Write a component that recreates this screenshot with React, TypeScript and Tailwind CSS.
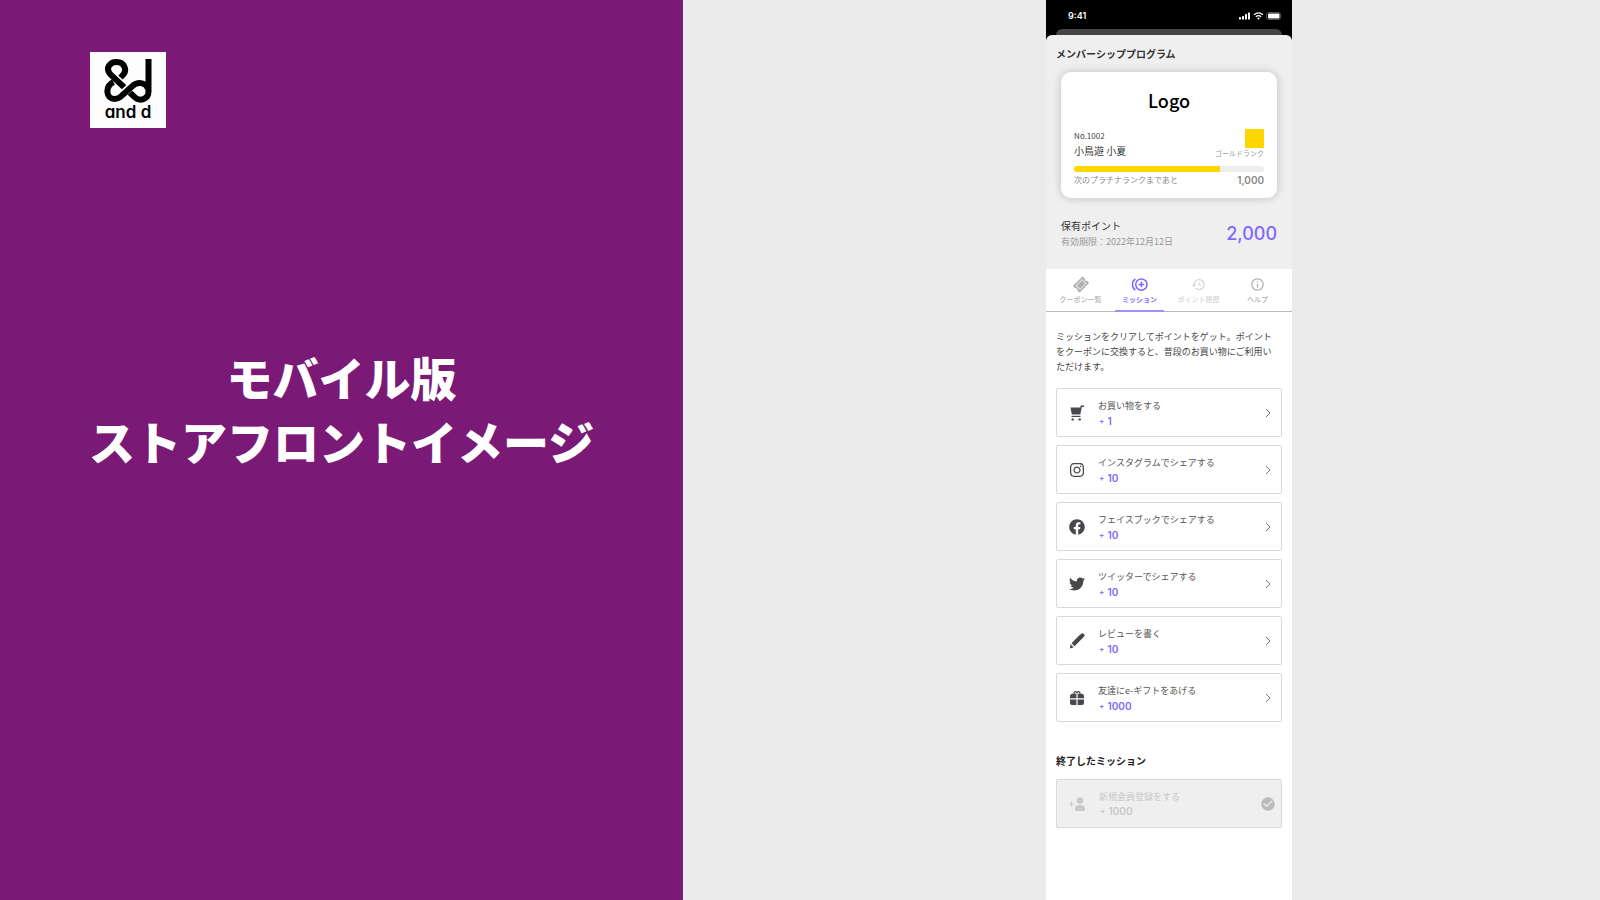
import type { ComponentType } from "react"
import { MdCheckCircle, MdHistory, MdInfoOutline } from "react-icons/md"
import { FaFacebook, FaInstagram, FaTicketAlt, FaTwitter } from "react-icons/fa"

type Icon = ComponentType<{ className?: string }>

interface Mission {
  icon: Icon
  title: string
  points: string
}

interface Tab {
  icon: Icon
  label: string
  color: string
  active?: boolean
}

function CartIcon({ className }: { className?: string }) {
  return (
    <svg viewBox="0 0 16 16" className={className} fill="currentColor">
      <path d="M1.5 2.5h9.700L11.800.6H15v1.300h-2.200L11.300 9.500H2.800z" />
      <path d="M2.500 10.800h9v1.200h-9z" />
      <circle cx="3.700" cy="14.400" r="1.200" />
      <circle cx="10.700" cy="14.400" r="1.200" />
    </svg>
  )
}

function PencilIcon({ className }: { className?: string }) {
  return (
    <svg viewBox="0 0 16 16" className={className} fill="currentColor">
      <path d="M10.400 2.300 12 .9a2 2 0 0 1 2.900 2.900L5.600 13.300 2.500 10.300z" />
      <path d="M1.700 11.200 4.700 14.200.700 15.500z" />
    </svg>
  )
}

function GiftIcon({ className }: { className?: string }) {
  return (
    <svg viewBox="0 0 16 16" className={className} fill="currentColor">
      <path
        d="M5.200 4.200C4.400 2 6.600.6 8 2.800 9.400.6 11.600 2 10.800 4.200"
        fill="none"
        stroke="currentColor"
        strokeWidth="1.200"
      />
      <path d="M3.500 3.700h3.900v4.600H1V6.200a2.500 2.500 0 0 1 2.500-2.500zM8.600 3.700h3.900A2.500 2.500 0 0 1 15 6.200v2.100H8.600zM1 9.500h6.400v5.500H3a2 2 0 0 1-2-2zM8.600 9.500H15V13a2 2 0 0 1-2 2H8.600z" />
    </svg>
  )
}

function ChevronIcon({ className }: { className?: string }) {
  return (
    <svg viewBox="0 0 6 10" className={className} fill="none" stroke="currentColor" strokeWidth="1">
      <path d="M1 1l4 4-4 4" />
    </svg>
  )
}

function TicketIcon({ className }: { className?: string }) {
  return (
    <span className={className}>
      <FaTicketAlt className="mx-auto h-full w-[14px] -rotate-45" />
    </span>
  )
}

function MissionIcon({ className }: { className?: string }) {
  return (
    <svg viewBox="0 0 18 16" className={className} fill="none" stroke="currentColor" strokeWidth="1.600">
      <circle cx="11" cy="8" r="6" />
      <path d="M11 5v6M8 8h6M4.500 2a7.500 7.500 0 0 0 0 12" />
    </svg>
  )
}

function AddPersonIcon({ className }: { className?: string }) {
  return (
    <svg viewBox="0 0 16 16" className={className} fill="currentColor">
      <circle cx="11" cy="4.500" r="3.200" />
      <path d="M6 15v-2.500C6 10 8 9 11 9s5 1 5 3.500V15z" />
      <path d="M0 8h5M2.500 5.500v5" stroke="currentColor" strokeWidth="1" />
    </svg>
  )
}

const tabs: Tab[] = [
  { icon: TicketIcon, label: "クーポン一覧", color: "text-[#b0b0b0]" },
  { icon: MissionIcon, label: "ミッション", color: "text-[#7b66ff]", active: true },
  { icon: MdHistory, label: "ポイント履歴", color: "text-[#d6d6d6]" },
  { icon: MdInfoOutline, label: "ヘルプ", color: "text-[#b0b0b0]" },
]

const missions: Mission[] = [
  { icon: CartIcon, title: "お買い物をする", points: "1" },
  { icon: FaInstagram, title: "インスタグラムでシェアする", points: "10" },
  { icon: FaFacebook, title: "フェイスブックでシェアする", points: "10" },
  { icon: FaTwitter, title: "ツイッターでシェアする", points: "10" },
  { icon: PencilIcon, title: "レビューを書く", points: "10" },
  { icon: GiftIcon, title: "友達にe-ギフトをあげる", points: "1000" },
]

function BrandLogo() {
  return (
    <div className="flex size-[76px] flex-col items-center bg-[#fdfdfd] pt-[6px] text-black">
      <svg viewBox="0 0 48 46" className="h-[46px] w-[48px] shrink-0" fill="none" stroke="currentColor" strokeWidth="6">
        {/* stem, bowl and the long diagonal */}
        <path d="M44.500 1V33.500C44.500 41.500 35.500 44 30.500 39L7 17C.5 10 6 4 12.700 4 20 4 24 12 18.500 17.500L16.500 19.500" />
        {/* lower loop, with a light casing where it crosses the diagonal */}
        <path d="M18 36.500 28.500 27" stroke="#fdfdfd" strokeWidth="8" />
        <path d="M9.500 24C.5 28.500 2 41 10.500 41 14 41 16 39.500 18 37.500L28.500 28C33.500 23.500 41 24 44 30.500" />
      </svg>
      <span className="font-['Inter'] text-[17px] leading-[16px] font-semibold [font-feature-settings:'cv11']">and d</span>
    </div>
  )
}

function StatusBar() {
  return (
    <div className="flex h-[29px] items-center justify-between pt-[2px] pr-[10px] pl-[22px] text-white">
      <span className="font-['Inter'] text-[9px] leading-[12px] font-semibold">9:41</span>
      <svg viewBox="0 0 44 10" className="h-[10px] w-[44px]" fill="currentColor">
        <rect x="1" y="6" width="2" height="2.500" rx=".5" />
        <rect x="4" y="5" width="2" height="3.500" rx=".5" />
        <rect x="7" y="3" width="2" height="5.500" rx=".5" />
        <rect x="10" y="1.500" width="2" height="7" rx=".5" />
        <path d="M16 3.700q4.500-3.600 9 0M17.800 5.700q2.700-2.200 5.400 0" fill="none" stroke="currentColor" strokeWidth="1.300" />
        <path d="M19 7q1.500-1 3 0L20.500 8.700z" />
        <rect x="28.500" y="1.500" width="14" height="7" rx="2" fill="none" stroke="currentColor" strokeOpacity=".3" />
        <rect x="30" y="2.500" width="11.500" height="5" rx="1" />
      </svg>
    </div>
  )
}

function MemberCard() {
  return (
    <div className="mx-[15px] mt-[10px] flex h-[126px] flex-col rounded-[10px] bg-white pt-[15px] pr-[13px] pl-[13px] shadow-[0_0_10px_rgba(0,0,0,0.2)]">
      <div className="text-center text-[18px] leading-[26px] font-medium text-black">Logo</div>
      <div className="mt-[16px] flex justify-between">
        <div className="pt-[1px]">
          <div className="text-[8px] leading-[12px] text-[#444]">No.1002</div>
          <div className="pt-[1px] text-[10px] leading-[16px] text-[#333]">小鳥遊 小夏</div>
        </div>
        <div className="flex flex-col items-end">
          <div className="size-[19px] bg-[#ffd600]" />
          <div className="text-[7px] leading-[10px] text-[#999]">ゴールドランク</div>
        </div>
      </div>
      <div className="mt-[7px] h-[6px] overflow-hidden rounded-full bg-[#eeeeee]">
        <div className="h-full w-[77%] bg-[#ffd600]" />
      </div>
      <div className="mt-[1px] flex items-center justify-between leading-[14px] text-[#888]">
        <span className="text-[8px]">次のプラチナランクまであと</span>
        <span className="font-['Inter'] text-[10px] font-semibold">1,000</span>
      </div>
    </div>
  )
}

function Points({ value }: { value: string }) {
  return (
    <div className="flex items-center gap-[3px] pl-[1px] font-['Inter'] text-[10px] leading-[14px] font-semibold">
      <span className="text-[8px]">+</span>
      <span>{value}</span>
    </div>
  )
}

function MissionRow({ icon: MissionGlyph, title, points }: Mission) {
  return (
    <button className="flex h-[49px] w-full items-center rounded-[2px] border border-[#d8dadb] bg-white pr-[10px] pl-[12px] text-left">
      <MissionGlyph className="size-4 shrink-0 text-[#48484c]" />
      <div className="ml-[13px] flex-1">
        <div className="text-[9px] leading-[16px] text-[#555]">{title}</div>
        <div className="text-[#8068ff]">
          <Points value={points} />
        </div>
      </div>
      <ChevronIcon className="h-[10px] w-[6px] text-[#777]" />
    </button>
  )
}

export default function App() {
  return (
    <div className="flex min-h-screen bg-[#ebebeb] font-['Noto_Sans_CJK_JP',sans-serif]" lang="ja">
      <section className="relative flex w-[42.7%] items-center justify-center bg-[#7a1a76]">
        <div className="absolute top-[52px] left-[90px]">
          <BrandLogo />
        </div>
        <h1 className="pb-[84px] text-center text-[46px] leading-[64px] font-black text-white">
          モバイル版
          <br />
          ストアフロントイメージ
        </h1>
      </section>

      <section className="flex flex-1 justify-center pl-[55px]">
        <div className="flex w-[246px] flex-col bg-white">
          <header className="bg-black">
            <StatusBar />
            <div className="mx-[10px] h-[6px] rounded-t-[6px] bg-[#444]" />
          </header>
          <div className="bg-black">
            <div className="h-[234px] rounded-t-[6px] bg-[#efefef] pt-[11px]">
              <h2 className="pl-[10px] text-[10px] leading-[16px] font-bold text-[#333]">メンバーシッププログラム</h2>
              <MemberCard />
              <div className="mx-[15px] mt-[20px] flex items-center justify-between">
                <div>
                  <div className="text-[10px] leading-[16px] text-[#333]">保有ポイント</div>
                  <div className="text-[9px] leading-[15px] text-[#999]">有効期限：2022年12月12日</div>
                </div>
                <div className="font-['Inter'] text-[18px] leading-[24px] font-medium text-[#8068ff]">2,000</div>
              </div>
            </div>
          </div>

          <nav className="flex h-[43px] gap-[10px] border-b border-[#bbb] px-[10px]">
            {tabs.map(({ icon: TabGlyph, label, color, active }) => (
              <button
                key={label}
                className={`-mb-px flex flex-1 flex-col items-center border-b-2 pt-[8px] ${color} ${
                  active ? "border-[#a08eff] font-bold" : "border-transparent font-medium"
                }`}
              >
                <TabGlyph className="h-[15px] w-[17px]" />
                <span className="pt-[2px] text-[7px] leading-[10px] whitespace-nowrap">{label}</span>
              </button>
            ))}
          </nav>

          <main className="px-[10px] pt-[17px]">
            <p className="pr-[8px] text-[9px] leading-[15px] text-[#444]">
              ミッションをクリアしてポイントをゲット。ポイントをクーポンに交換すると、普段のお買い物にご利用いただけます。
            </p>
            <div className="mt-[14px] flex flex-col gap-2">
              {missions.map((mission) => (
                <MissionRow key={mission.title} {...mission} />
              ))}
            </div>

            <h3 className="mt-[31px] text-[10px] leading-[16px] font-bold text-[#222]">終了したミッション</h3>
            <div className="mt-[10px] flex h-[49px] items-center rounded-[2px] border border-[#d8dadb] bg-[#efefef] pr-[5px] pl-[12px] text-[#c8c8c8]">
              <AddPersonIcon className="size-4" />
              <div className="ml-[14px] flex-1">
                <div className="text-[9px] leading-[15px]">新規会員登録をする</div>
                <Points value="1000" />
              </div>
              <MdCheckCircle className="size-4 text-[#bbb]" />
            </div>
          </main>
        </div>
      </section>
    </div>
  )
}
